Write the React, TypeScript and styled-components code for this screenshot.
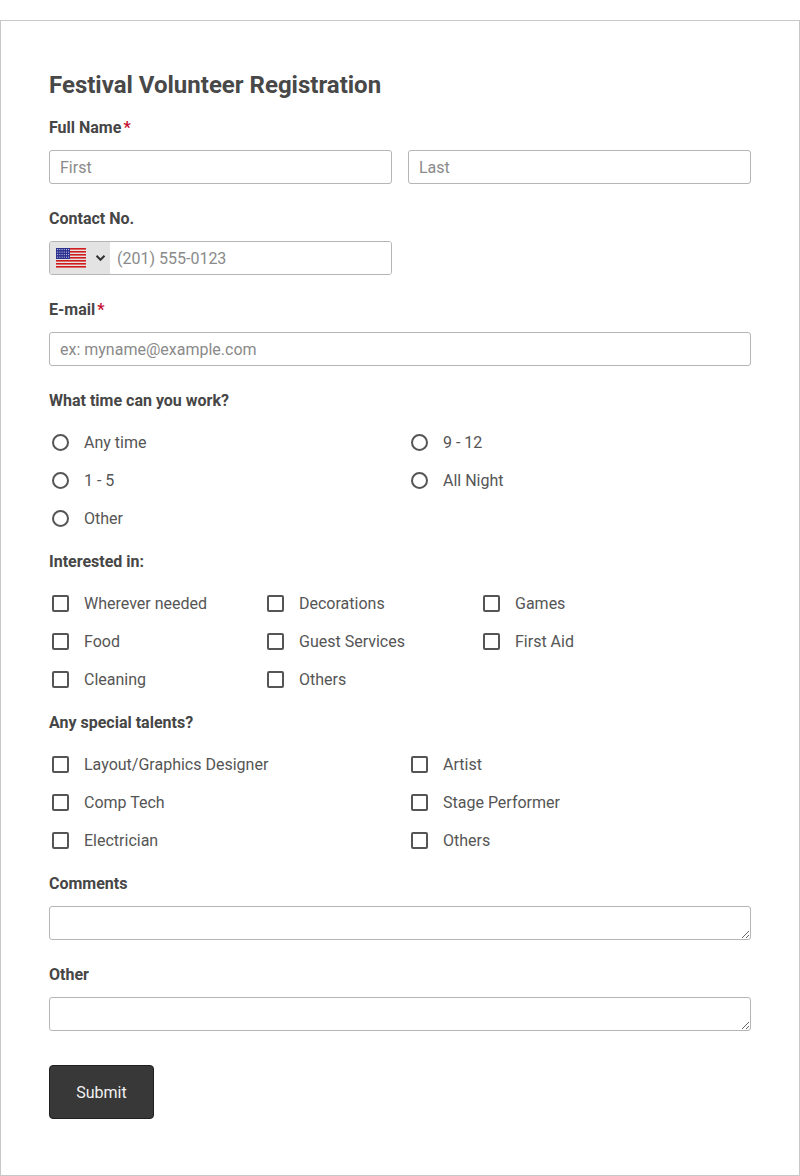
import React from 'react'
import styled, { createGlobalStyle } from 'styled-components'

const GlobalStyle = createGlobalStyle`
  html, body {
    margin: 0;
    padding: 0;
    background: #fff;
  }
  body {
    font-family: Roboto, 'Liberation Sans', Arial, sans-serif;
  }
`

const Card = styled.form`
  margin-top: 20px;
  width: 800px;
  box-sizing: border-box;
  border: 1px solid #c8c8c8;
  padding: 49px 48px 56px;
  background: #fff;
`

const Title = styled.h1`
  margin: 0 0 18px;
  font-size: 24px;
  line-height: 30px;
  font-weight: 700;
  color: #484848;
`

const Field = styled.div<{ $gap?: number }>`
  margin-bottom: ${(p) => p.$gap ?? 25}px;
`

const Label = styled.div`
  font-size: 16px;
  line-height: 20px;
  font-weight: 700;
  color: #464646;
  margin-bottom: 12px;
`

const Required = styled.span`
  color: #c8102e;
  margin-left: 2px;
`

const Split = styled.div`
  display: grid;
  grid-template-columns: 343px 343px;
  column-gap: 16px;
`

const TextInput = styled.input`
  box-sizing: border-box;
  width: 100%;
  height: 34px;
  border: 1px solid #b5b5b5;
  border-radius: 3px;
  padding: 0 10px;
  font-family: inherit;
  font-size: 16px;
  color: #444;
  outline: none;
  &::placeholder {
    color: #8a8a8a;
  }
`

const PhoneBox = styled.div`
  box-sizing: border-box;
  display: flex;
  height: 34px;
  border: 1px solid #b5b5b5;
  border-radius: 3px;
  overflow: hidden;
`

const CountryPicker = styled.div`
  display: flex;
  align-items: center;
  gap: 9px;
  width: 60px;
  padding-left: 6px;
  box-sizing: border-box;
  background: #e3e3e3;
  color: #333;
`

const PhoneInput = styled.input`
  flex: 1;
  border: none;
  outline: none;
  padding: 0 7px;
  font-family: inherit;
  font-size: 16px;
  color: #444;
  &::placeholder {
    color: #8a8a8a;
  }
`

const TextArea = styled.textarea`
  display: block;
  box-sizing: border-box;
  width: 100%;
  height: 34px;
  min-height: 34px;
  border: 1px solid #b5b5b5;
  border-radius: 3px;
  padding: 6px 10px;
  font-family: inherit;
  font-size: 16px;
  resize: vertical;
  outline: none;
`

const Options = styled.div<{ $cols: string }>`
  display: grid;
  grid-template-columns: ${(p) => p.$cols};
`

const Option = styled.label`
  display: flex;
  align-items: center;
  height: 38px;
  font-size: 16px;
  color: #555;
  cursor: pointer;
`

const Mark = styled.span<{ $round?: boolean }>`
  box-sizing: border-box;
  width: 17px;
  height: 17px;
  margin: 0 15px 0 3px;
  border: 2px solid #555;
  border-radius: ${(p) => (p.$round ? '50%' : '2px')};
  flex-shrink: 0;
`

const SubmitButton = styled.button`
  margin-top: 9px;
  width: 105px;
  height: 54px;
  border: 1px solid #1f1f1f;
  border-radius: 4px;
  background: #383838;
  color: #f2f2f2;
  font-family: inherit;
  font-size: 16px;
  cursor: pointer;
`

const UsFlag: React.FC = () => (
  <svg width="30" height="21" viewBox="0 0 30 21">
    {Array.from({ length: 7 }).map((_, i) => (
      <rect key={i} x="0" y={i * 3} width="30" height="1.6" fill="#d21c1c" />
    ))}
    <rect x="0" y="0" width="14" height="11" fill="#2b2f8f" />
    {Array.from({ length: 4 }).map((_, r) =>
      Array.from({ length: 6 }).map((_, c) => (
        <rect key={`${r}-${c}`} x={1.2 + c * 2.2} y={1.2 + r * 2.5} width="0.9" height="0.9" fill="#fff" />
      ))
    )}
  </svg>
)

const Chevron: React.FC = () => (
  <svg width="11" height="8" viewBox="0 0 11 8">
    <path d="M1.5 1.8 L5.5 5.8 L9.5 1.8" fill="none" stroke="#333" strokeWidth="2" />
  </svg>
)

const times = ['Any time', '9 - 12', '1 - 5', 'All Night', 'Other']
const interests = [
  'Wherever needed',
  'Decorations',
  'Games',
  'Food',
  'Guest Services',
  'First Aid',
  'Cleaning',
  'Others',
]
const talents = [
  'Layout/Graphics Designer',
  'Artist',
  'Comp Tech',
  'Stage Performer',
  'Electrician',
  'Others',
]

const App: React.FC = () => (
  <>
    <GlobalStyle />
    <Card onSubmit={(e) => e.preventDefault()}>
      <Title>Festival Volunteer Registration</Title>

      <Field>
        <Label>
          Full Name<Required>*</Required>
        </Label>
        <Split>
          <TextInput placeholder="First" />
          <TextInput placeholder="Last" />
        </Split>
      </Field>

      <Field>
        <Label>Contact No.</Label>
        <Split>
          <PhoneBox>
            <CountryPicker>
              <UsFlag />
              <Chevron />
            </CountryPicker>
            <PhoneInput placeholder="(201) 555-0123" />
          </PhoneBox>
        </Split>
      </Field>

      <Field>
        <Label>
          E-mail<Required>*</Required>
        </Label>
        <TextInput placeholder="ex: myname@example.com" />
      </Field>

      <Field $gap={15}>
        <Label>What time can you work?</Label>
        <Options $cols="359px 343px">
          {times.map((t) => (
            <Option key={t}>
              <Mark $round />
              {t}
            </Option>
          ))}
        </Options>
      </Field>

      <Field $gap={15}>
        <Label>Interested in:</Label>
        <Options $cols="215px 216px 215px">
          {interests.map((t) => (
            <Option key={t}>
              <Mark />
              {t}
            </Option>
          ))}
        </Options>
      </Field>

      <Field $gap={15}>
        <Label>Any special talents?</Label>
        <Options $cols="359px 343px">
          {talents.map((t) => (
            <Option key={t}>
              <Mark />
              {t}
            </Option>
          ))}
        </Options>
      </Field>

      <Field>
        <Label>Comments</Label>
        <TextArea />
      </Field>

      <Field>
        <Label>Other</Label>
        <TextArea />
      </Field>

      <SubmitButton type="submit">Submit</SubmitButton>
    </Card>
  </>
)

export default App
